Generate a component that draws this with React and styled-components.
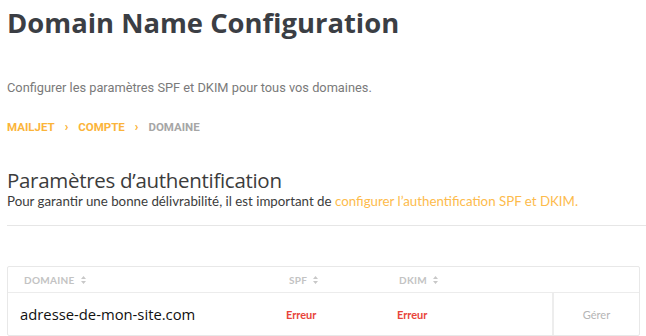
import React from "react";
import styled, { createGlobalStyle } from "styled-components";

const GlobalStyle = createGlobalStyle`
  body {
    margin: 0;
    background: #ffffff;
  }
`;

const Page = styled.div`
  padding: 0 6px 0 7px;
`;

const Title = styled.h1`
  margin: 0;
  padding-top: 3px;
  font-family: "Open Sans", sans-serif;
  font-weight: 700;
  font-size: 27.4px;
  line-height: 39px;
  color: #3b3e44;
`;

const Lead = styled.p`
  margin: 38px 0 0;
  font-family: Roboto, sans-serif;
  font-size: 12.8px;
  line-height: 16px;
  color: #7a7a7a;
`;

const Crumbs = styled.nav`
  margin-top: 24px;
  display: flex;
  align-items: center;
  gap: 10px;
  font-family: Roboto, sans-serif;
  font-weight: 700;
  font-size: 11.5px;
  line-height: 14px;
`;

const Crumb = styled.span`
  color: ${(p) => (p.$current ? "#a6a6a6" : "#fbb43a")};
`;

const Chevron = styled.span`
  color: #fbb43a;
  font-size: 12px;
  font-weight: 900;
`;

const SectionTitle = styled.h2`
  margin: 35px 0 0;
  font-family: "Open Sans", sans-serif;
  font-weight: 400;
  font-size: 20.5px;
  line-height: 22px;
  color: #3c3c3c;
  letter-spacing: -0.3px;
`;

const Note = styled.p`
  margin: 3px 0 0;
  font-family: Lato, sans-serif;
  font-size: 13.3px;
  line-height: 14px;
  color: #3c3c3c;
`;

const Link = styled.span`
  color: #fdbb4c;
`;

const Divider = styled.hr`
  margin: 17px -6px 0 0;
  border: 0;
  border-top: 1px solid #e6e6e6;
`;

const Table = styled.div`
  margin-top: 40px;
  width: 633px;
  border: 1px solid #e8e8e8;
  border-radius: 2px;
  box-sizing: border-box;
`;

const Row = styled.div`
  display: grid;
  grid-template-columns: 276px 110px 158px 1fr;
  height: ${(p) => (p.$head ? "25px" : "42px")};
  border-bottom: ${(p) => (p.$head ? "1px solid #ececec" : "0")};
  align-items: center;
`;

const HeadCell = styled.div`
  padding-left: ${(p) => p.$pad}px;
  font-family: Lato, sans-serif;
  font-size: 10px;
  font-weight: 700;
  color: #c3c3c3;
  letter-spacing: 0.3px;
  display: flex;
  align-items: center;
  gap: 6px;
`;

const SortIcon = () => (
  <svg width="5" height="8" viewBox="0 0 5 8">
    <path d="M2.5 0L5 3H0z M2.5 8L0 5h5z" fill="#c8c8c8" />
  </svg>
);

const DomainCell = styled.div`
  padding-left: 12px;
  font-family: "Open Sans", sans-serif;
  font-size: 14.8px;
  color: #111111;
`;

const StatusCell = styled.div`
  padding-left: ${(p) => p.$pad}px;
  font-family: Lato, sans-serif;
  font-weight: 700;
  font-size: 11px;
  color: #e8443a;
`;

const ActionCell = styled.div`
  align-self: stretch;
  display: flex;
  align-items: center;
  justify-content: center;
  border-left: 2px solid #ededed;
  font-family: Lato, sans-serif;
  font-size: 11px;
  color: #b5b5b5;
`;

const App = () => {
  return (
    <Page>
      <GlobalStyle />
      <Title>Domain Name Configuration</Title>
      <Lead>Configurer les paramètres SPF et DKIM pour tous vos domaines.</Lead>
      <Crumbs>
        <Crumb>MAILJET</Crumb>
        <Chevron>›</Chevron>
        <Crumb>COMPTE</Crumb>
        <Chevron>›</Chevron>
        <Crumb $current>DOMAINE</Crumb>
      </Crumbs>
      <SectionTitle>Paramètres d’authentification</SectionTitle>
      <Note>
        Pour garantir une bonne délivrabilité, il est important de{" "}
        <Link>configurer l’authentification SPF et DKIM.</Link>
      </Note>
      <Divider />
      <Table>
        <Row $head>
          <HeadCell $pad={16}>
            DOMAINE <SortIcon />
          </HeadCell>
          <HeadCell $pad={5}>
            SPF <SortIcon />
          </HeadCell>
          <HeadCell $pad={5}>
            DKIM <SortIcon />
          </HeadCell>
          <div />
        </Row>
        <Row>
          <DomainCell>adresse-de-mon-site.com</DomainCell>
          <StatusCell $pad={2}>Erreur</StatusCell>
          <StatusCell $pad={3}>Erreur</StatusCell>
          <ActionCell>Gérer</ActionCell>
        </Row>
      </Table>
    </Page>
  );
};

export default App;
